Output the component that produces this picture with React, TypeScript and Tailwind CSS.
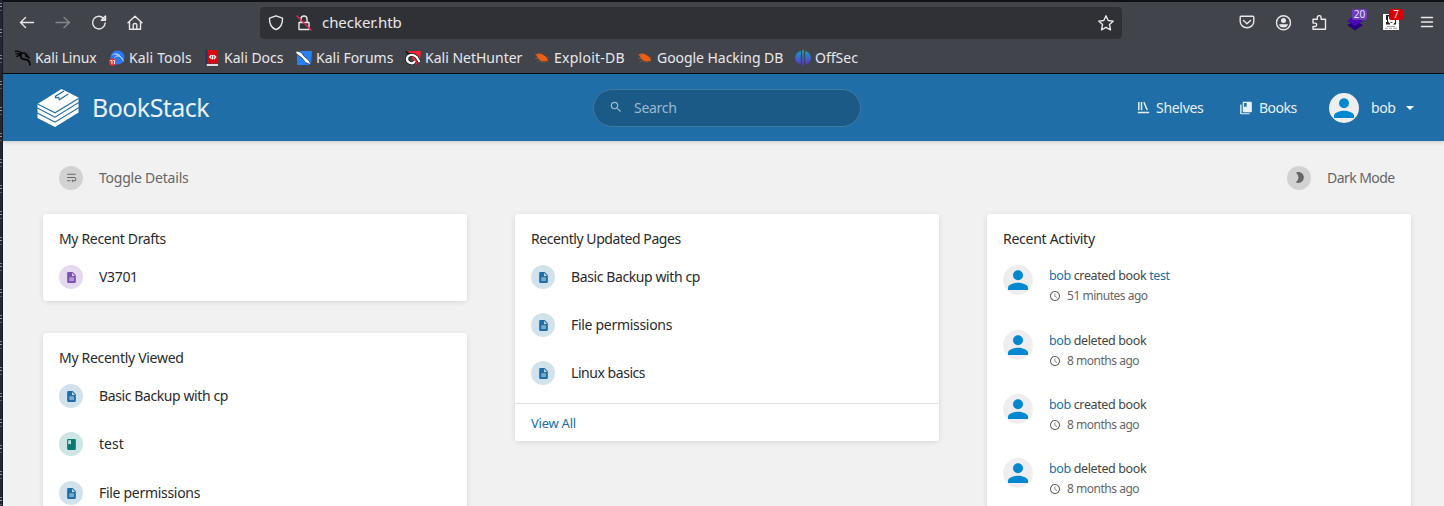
import React from "react";

const PAGE = "M14 2H6c-1.1 0-1.99.9-1.99 2L4 20c0 1.1.89 2 1.99 2H18c1.1 0 2-.9 2-2V8l-6-6zm-1 7V3.500L18.500 9H13z";
const BOOK = "M18 2H6c-1.1 0-2 .9-2 2v16c0 1.1.9 2 2 2h12c1.1 0 2-.9 2-2V4c0-1.1-.9-2-2-2zM6 4h5v8l-2.5-1.5L6 12V4z";
const BOOKS = "M20.25 1.2H8.66A1.77 1.77 0 0 0 6.4 2.97v14.62c0 .97.8 1.77 1.76 1.77h12.1c.97 0 1.76-.8 1.76-1.77V2.97a1.77 1.77 0 0 0-1.77-1.77zM8.66 3.47h4.41v7.06l-2.2-1.32-2.21 1.32zM2 6v15c0 1 .8 1.8 1.8 1.8h14.3V20.800H4.300V6z";
const SHELF = "M2 2h2.7v15H2zM7 2h2.7v15H7zM11.6 2.8l2.5-.9 6 14.4-2.5.9zM1.5 20h21v2.5h-21z";
const WRAP = "M4 19h6v-2H4v2zM20 5H4v2h16V5zm-3 6H4v2h13.25c1.1 0 2 .9 2 2s-.9 2-2 2H15v-2l-3 3 3 3v-2h2c2.21 0 4-1.79 4-4s-1.79-4-4-4z";
const MOON = "M10 2c-1.82 0-3.53.5-5 1.35C7.99 5.08 10 8.3 10 12s-2.01 6.92-5 8.65C6.47 21.5 8.18 22 10 22c5.52 0 10-4.48 10-10S15.52 2 10 2z";
const CLOCK = "M11.99 2C6.47 2 2 6.48 2 12s4.47 10 9.99 10C17.52 22 22 17.52 22 12S17.52 2 11.99 2zM12 20c-4.42 0-8-3.58-8-8s3.58-8 8-8 8 3.58 8 8-3.58 8-8 8zm.5-13H11v6l5.25 3.15.75-1.23-4.5-2.67z";
const SEARCH = "M15.5 14h-.79l-.28-.27A6.47 6.47 0 0 0 16 9.5 6.5 6.5 0 1 0 9.5 16c1.61 0 3.09-.59 4.23-1.57l.27.28v.79l5 4.99L20.49 19l-4.99-5zm-6 0C7.01 14 5 11.99 5 9.5S7.01 5 9.5 5 14 7.01 14 9.5 11.99 14 9.5 14z";

function Icon({ d, className }: { d: string; className: string }) {
  return (
    <svg viewBox="0 0 24 24" fill="currentColor" className={"shrink-0 " + className}>
      <path d={d} />
      {d === PAGE && <path d="M8 11.500h8.500v7H8z" fill="#fff" opacity=".42" />}
    </svg>
  );
}

function Line({ children, className = "size-4" }: { children: React.ReactNode; className?: string }) {
  return (
    <svg viewBox="0 0 16 16" fill="none" stroke="currentColor" strokeWidth="1.4" strokeLinecap="round" strokeLinejoin="round" className={"shrink-0 " + className}>
      {children}
    </svg>
  );
}

function Avatar({ className }: { className: string }) {
  return (
    <svg viewBox="0 0 30 30" className={"shrink-0 " + className}>
      <circle cx="15" cy="15" r="15" fill="#eeeeee" />
      <circle cx="15" cy="10.2" r="5" fill="#0288d1" />
      <path d="M5 25v-2.3c0-3.3 6.6-5 10-5s10 1.7 10 5V25z" fill="#0288d1" />
    </svg>
  );
}

const Bug = () => (
  <svg viewBox="0 0 16 16" className="size-4">
    <path d="M1.500 4.500L5 3.500c3 0 4 1.500 6 2.500 1.500 1 2 2.500 3.500 4.500l-2.500.5c-2 1-5 .3-7-1.500z" fill="#ec5e10" />
    <path d="M1 4l3 2M1 8.500h4M3.500 12l2-2M7 12.500l1-2M10 13v-2M13 12.500l-1-2M4 3l2 2M12 8l2.500-1" stroke="#a85a34" strokeWidth=".7" />
  </svg>
);

const Dragon = () => (
  <svg viewBox="0 0 16 16" fill="none" stroke="#050505" className="size-4">
    <path d="M0 1.500c3-.8 5 0 7 1.500M.5 4.200c2-1 4-.4 6-.2M1.500 6.800c1.500-1.600 3-1.800 5-1.800" strokeWidth="1.300" />
    <path d="M5.500 3c.5 2-.5 4 1.500 5.700 2 1 5 .3 6.500 2 1 1.200 1.500 2.500 1.500 4.800" strokeWidth="1.800" />
    <path d="M6 3.500c3-1.200 6 0 7 3.500l-3-1.500M13 6.500l1.500 2" strokeWidth="1.500" />
  </svg>
);

const Tools = () => (
  <svg viewBox="0 0 16 16" className="size-4">
    <circle cx="8.500" cy="7.500" r="7" fill="#2777ff" />
    <path d="M3.500 5c3-2 5-1 7 0M5.500 7.500c2-2 5-2 7 0s1 3 2 4M6 4l5 2 2 3" stroke="#b9d5ff" strokeWidth="1" fill="none" />
    <circle cx="3.700" cy="12" r="3.700" fill="#e83338" />
    <path d="M1.300 10.500h1.600v3.500M4 10.500h1.600v3.500" stroke="#fff" strokeWidth="1" fill="none" />
  </svg>
);

const Docs = () => (
  <svg viewBox="0 0 16 16" className="size-4">
    <path d="M2 0h12v13.500H2z" fill="#d8090d" />
    <path d="M1.500 0h2v15h-2z" fill="#1f3560" />
    <path d="M2.500 14h11.500V16h-11z" fill="#e4dddd" />
    <path d="M7.500 5L5.700 7l1.800 1.500M8.800 5l-.4 4.500M9.800 5.200L11.700 7l-1.900 2" stroke="#fff" strokeWidth="1.200" fill="none" />
  </svg>
);

const Forums = () => (
  <svg viewBox="0 0 16 16" className="size-4">
    <path d="M1 1h15l-1 14H1z" fill="#2481f6" />
    <path d="M0 .8l5 1.400 3.500 4.500 4 3.300 3 5-6-2.500-3.500-4.500L0 3.500z" fill="#fff" stroke="#16283d" strokeWidth=".7" />
  </svg>
);

const Hunter = () => (
  <svg viewBox="0 0 16 16" className="size-4">
    <path d="M3 1h13l-1 9-4 5z" fill="#f12235" />
    <path d="M.5 1.500L4 4" stroke="#111" strokeWidth="1.500" />
    <path d="M14.500 12l-3-5C8 3 2 5 2 9c0 4 6 6 8 2" stroke="#111" strokeWidth="3.500" fill="none" />
    <path d="M14.500 12l-3-5C8 3 2 5 2 9c0 4 6 6 8 2" stroke="#fff" strokeWidth="2.300" fill="none" />
  </svg>
);

const OffSec = () => (
  <svg viewBox="0 0 16 16" className="size-4">
    <defs><linearGradient id="os" gradientUnits="userSpaceOnUse" x1="0" y1="0" x2="0" y2="16"><stop stopColor="#10a7bd" /><stop offset="1" stopColor="#6428d5" /></linearGradient></defs>
    <path d="M5.800 1C-1.500 3-1.500 12 4.500 14c1 0 1.300-1 1.300-2zM10.200 1c7.300 2 7.300 11 1.300 13-1 0-1.300-1-1.300-2zM7.200 0h1.600v16H7.200z" fill="url(#os)" />
  </svg>
);

function Bookmark({ icon, label, className }: { icon: React.ReactNode; label: string; className: string }) {
  return (
    <div className={"flex shrink-0 items-center whitespace-nowrap " + className}>
      {icon}
      <span className="ml-1">{label}</span>
    </div>
  );
}

function Browser() {
  return (
    <header className="h-[74px] border-t-2 border-b border-t-[#101116] border-b-[#0c0c0f] bg-[#42444c] text-[#e8e8eb]">
      <div className="flex h-[41px] items-center pl-4">
        <Line><path d="M14.500 7.500H1.500M6.500 2.500L1.500 7.500l5 5" /></Line>
        <Line className="ml-5 size-4 text-[#85868b]"><path d="M1 7.500h13.500M9 2.500L14.500 7.500 9 12.500" /></Line>
        <Line className="ml-5 size-4"><path d="M14.200 8a6.300 6.300 0 1 1-2-5L14 4.500M14.500 1v4.200h-4.200z" /></Line>
        <Line className="ml-5 size-4"><path d="M1 7.800L8 1.300l7 6.500M2.500 7v7.300h11V7M6.200 14V9.700q0-1.200 1.800-1.200t1.800 1.200V14" /></Line>
        <div className="ml-[117px] flex h-8 w-[862px] shrink-0 items-center rounded bg-[#303136] pr-2 pl-2">
          <Line><path d="M8 .8l6.500 2.400c.3 6-1.600 9.500-6.500 11.500-4.900-2-6.800-5.500-6.500-11.500z" /></Line>
          <Line className="ml-3 size-4"><path d="M3 7.500h10v7H3zM5 7.500V4a3 3 0 0 1 6 0v3.500" /><path d="M1 1l14 14" stroke="#e22850" /></Line>
          <span className="ml-[10px] pb-0.5 text-[15px] leading-5 tracking-[-0.05px]">checker.htb</span>
          <Line className="ml-auto size-4"><path d="M8 .8l2.200 4.700 5.100.6-3.800 3.500 1 5.200L8 12.300l-4.500 2.500 1-5.200L.7 6.100l5.100-.6z" /></Line>
        </div>
        <Line className="ml-[117px] size-4"><path d="M2.200 1.300h11.600q1 0 1 1v4.200a6.800 6.200 0 0 1-13.600 0V2.300q0-1 1-1zM4.500 5.500l3.500 3.300L11.500 5.500" /></Line>
        <Line className="ml-5 size-4"><circle cx="8.500" cy="7.700" r="7" /><circle cx="8.500" cy="5.500" r="2.500" fill="currentColor" stroke="none" /><path d="M4 9.200h9q-.8 3.300-4.500 3.300t-4.500-3.300z" fill="currentColor" stroke="none" /></Line>
        <Line className="ml-5 size-4"><path d="M2 14.300V11.500h2a1.700 1.700 0 0 0 0-3.400H2V4.300h4.300V2.500a1.900 1.900 0 0 1 3.800 0v1.800h4.400v10z" /></Line>
        <div className="relative ml-5 size-4 shrink-0">
          <svg viewBox="0 0 16 16" className="size-4"><path d="M0 10l8 5.500 8-5.500-8-4z" fill="#260078" /><path d="M0 6l8 5L16 6 8 0z" fill="#4b05b4" /></svg>
          <span className="absolute -top-[6px] left-[5px] h-[11px] w-[15px] rounded-[2px] bg-[#6c3bbf] text-center text-[10px] leading-[11px]">20</span>
        </div>
        <div className="relative ml-5 size-4 shrink-0 -translate-y-px bg-white">
          <svg viewBox="0 0 16 16" className="size-4"><path d="M3 1h3v1.500H5v5l2 2v1H3V8h1V6H3zM13 6v4.500h-3l2-2V6zM7 6c0 3 3 3 3 0l-.8 3h-1.500z" fill="#222" /><path d="M4 12.500h8M2 14.300h3m1 0h3m1 0h4" stroke="#888" strokeWidth=".8" /></svg>
          <span className="absolute -top-[5px] left-[6px] h-[11px] w-[14px] rounded-[2px] bg-[#d90000] text-center text-[10px] leading-[11px]">7</span>
        </div>
        <Line className="ml-5 size-4"><path d="M2.500 2.500h11M2.500 7h11M2.500 11.500h11" /></Line>
      </div>
      <div className="flex h-[30px] items-center pl-3 text-[14px] leading-5">
        <Bookmark className="w-[94px] tracking-[-0.15px]" icon={<Dragon />} label="Kali Linux" />
        <Bookmark className="w-[95px] tracking-[0.15px]" icon={<Tools />} label="Kali Tools" />
        <Bookmark className="w-[92px]" icon={<Docs />} label="Kali Docs" />
        <Bookmark className="w-[109px]" icon={<Forums />} label="Kali Forums" />
        <Bookmark className="w-[129px]" icon={<Hunter />} label="Kali NetHunter" />
        <Bookmark className="w-[103px] tracking-[0.25px]" icon={<Bug />} label="Exploit-DB" />
        <Bookmark className="w-[158px] tracking-[-0.05px]" icon={<Bug />} label="Google Hacking DB" />
        <Bookmark className="" icon={<OffSec />} label="OffSec" />
      </div>
    </header>
  );
}

function Logo() {
  return (
    <svg viewBox="0 0 42 38" className="ml-[34px] h-[38px] w-[42px] shrink-0" fill="#fff">
      <path d="M.5 15L24.500 0 41.500 8.500V13L18 27.500.5 18.500z" />
      <path d="M.5 19.700L18 28.700 41.500 14.200V18.300L18 32.500.5 23.500zM.5 24.800L18 33.700 41.500 19.500V23.500L18 38 .5 29z" />
      <path d="M.5 15L18 23.800 41.500 9.500" fill="none" stroke="#206ea7" strokeWidth="1.100" />
      <path d="M27 2L18.500 7.200v1.600l3.200-.4.600 2.400 9-5.800" fill="none" stroke="#206ea7" strokeWidth="1.200" />
    </svg>
  );
}

function TopBar() {
  return (
    <nav className="relative flex h-[67px] shrink-0 items-center bg-[#206ea7] text-[14px] text-[#e9f0f6] shadow-[0_1px_4px_rgba(0,0,0,0.18)]">
      <Logo />
      <span className="ml-[13px] w-[121px] shrink-0 text-[25px] tracking-[-0.55px] whitespace-nowrap">BookStack</span>
      <div className="ml-[380px] flex h-[38px] w-[268px] shrink-0 items-center rounded-full border border-[#42799f] bg-[#1b5a86] pl-[15px] text-[#9db9cd]">
        <Icon d={SEARCH} className="mb-0.5 size-[14px]" />
        <span className="ml-[11px] tracking-[-0.3px]">Search</span>
      </div>
      <div className="ml-[276px] flex w-[102px] shrink-0 items-center"><Icon d={SHELF} className="size-[13px]" /><span className="ml-[6px] tracking-[-0.3px]">Shelves</span></div>
      <div className="flex w-[90px] shrink-0 items-center"><Icon d={BOOKS} className="size-[14px]" /><span className="ml-[6px] tracking-[-0.5px]">Books</span></div>
      <Avatar className="size-[30px]" />
      <span className="ml-3 w-[35px] tracking-[-0.4px]">bob</span>
      <svg viewBox="0 0 8 4" className="w-2 shrink-0"><path d="M0 0h8L4 4z" fill="#fff" /></svg>
    </nav>
  );
}

function Chip({ d, className }: { d: string; className: string }) {
  return <span className={"flex size-6 shrink-0 items-center justify-center rounded-full " + className}><Icon d={d} className="size-[13px]" /></span>;
}

function Entry({ label, kind = "page", className = "tracking-[-0.4px]" }: { label: string; kind?: "page" | "book" | "draft"; className?: string }) {
  const tint = { page: "bg-[#d2e2ed] text-[#206ea7]", book: "bg-[#cde6e3] text-[#077b70]", draft: "bg-[#e5d9ef] text-[#7e50b1]" }[kind];
  return (
    <div className={"flex h-6 items-center " + className}>
      <Chip d={kind === "book" ? BOOK : PAGE} className={tint} />
      <span className="ml-4 pb-px leading-5 whitespace-nowrap">{label}</span>
    </div>
  );
}

function Card({ title, className, children }: { title: string; className: string; children: React.ReactNode }) {
  return (
    <section className={"w-[424px] rounded-[3px] bg-white shadow-[0_1px_6px_-1px_rgba(0,0,0,0.15)] " + className}>
      <h2 className="ml-4 pt-[15px] leading-5">{title}</h2>
      {children}
    </section>
  );
}

function Activity({ verb, target, time, className }: { verb: string; target?: string; time: string; className: string }) {
  return (
    <div className={"flex pl-4 " + className}>
      <Avatar className="size-[30px]" />
      <div className="ml-4 text-[12.5px] text-[#444]">
        <p className="pt-px leading-5 tracking-[-0.37px]"><span className="text-[#206ea7]">bob</span> {verb} book{target && <span className="text-[#206ea7]"> {target}</span>}</p>
        <p className="flex items-center text-[12px] leading-5 tracking-[-0.48px] text-[#666]"><Icon d={CLOCK} className="mr-[6px] size-3" />{time}</p>
      </div>
    </div>
  );
}

export default function App() {
  return (
    <div className="flex h-[506px] w-[1444px] overflow-hidden font-['Noto_Sans',sans-serif]">
      <div className="h-full w-[3px] shrink-0 border-r border-[#151c2c] bg-[repeating-linear-gradient(#24272e_0_3px,#85888c_3px_4px,#24272e_4px_6px,#9a9c9e_6px_7px,#24272e_7px_10px,#5a5d63_10px_11px,#24272e_11px_26px)]" />
      <div className="flex w-[1441px] shrink-0 flex-col">
        <Browser />
        <TopBar />
        <main className="grow bg-[#f1f1f1] text-[14px] text-[#2a2a2a]">
          <div className="flex h-[73px] items-center justify-between pr-[49px] pl-14 text-[#666]">
            <div className="flex items-center"><Chip d={WRAP} className="bg-[#d2d2d2]" /><span className="ml-4 tracking-[-0.22px]">Toggle Details</span></div>
            <div className="flex items-center"><Chip d={MOON} className="bg-[#d2d2d2]" /><span className="ml-4 w-[68px] tracking-[-0.55px] whitespace-nowrap">Dark Mode</span></div>
          </div>
          <div className="flex items-start gap-12 pl-10">
            <div>
              <Card title="My Recent Drafts" className="h-[87px] tracking-[-0.33px]"><Entry kind="draft" label="V3701" className="mt-4 ml-4" /></Card>
              <Card title="My Recently Viewed" className="mt-8 h-[260px] tracking-[-0.3px]">
                <div className="mt-4 ml-4 flex flex-col gap-6">
                  <Entry label="Basic Backup with cp" />
                  <Entry kind="book" label="test" className="tracking-normal" />
                  <Entry label="File permissions" className="mt-px tracking-[-0.3px]" />
                </div>
              </Card>
            </div>
            <Card title="Recently Updated Pages" className="h-[227px] tracking-[-0.44px]">
              <div className="mt-4 ml-4 flex flex-col gap-6">
                <Entry label="Basic Backup with cp" />
                <Entry label="File permissions" className="tracking-[-0.3px]" />
                <Entry label="Linux basics" className="tracking-[-0.45px]" />
              </div>
              <div className="mt-[18px] border-t border-[#ddd] pt-[9px] pl-4 text-[13px] leading-5 tracking-[-0.25px] text-[#206ea7]">View All</div>
            </Card>
            <Card title="Recent Activity" className="h-[400px] tracking-[-0.27px]">
              <Activity className="mt-4 h-[65px]" verb="created" target="test" time="51 minutes ago" />
              <Activity className="h-16" verb="deleted" time="8 months ago" />
              <Activity className="h-16" verb="created" time="8 months ago" />
              <Activity className="h-16" verb="deleted" time="8 months ago" />
            </Card>
          </div>
        </main>
      </div>
    </div>
  );
}
